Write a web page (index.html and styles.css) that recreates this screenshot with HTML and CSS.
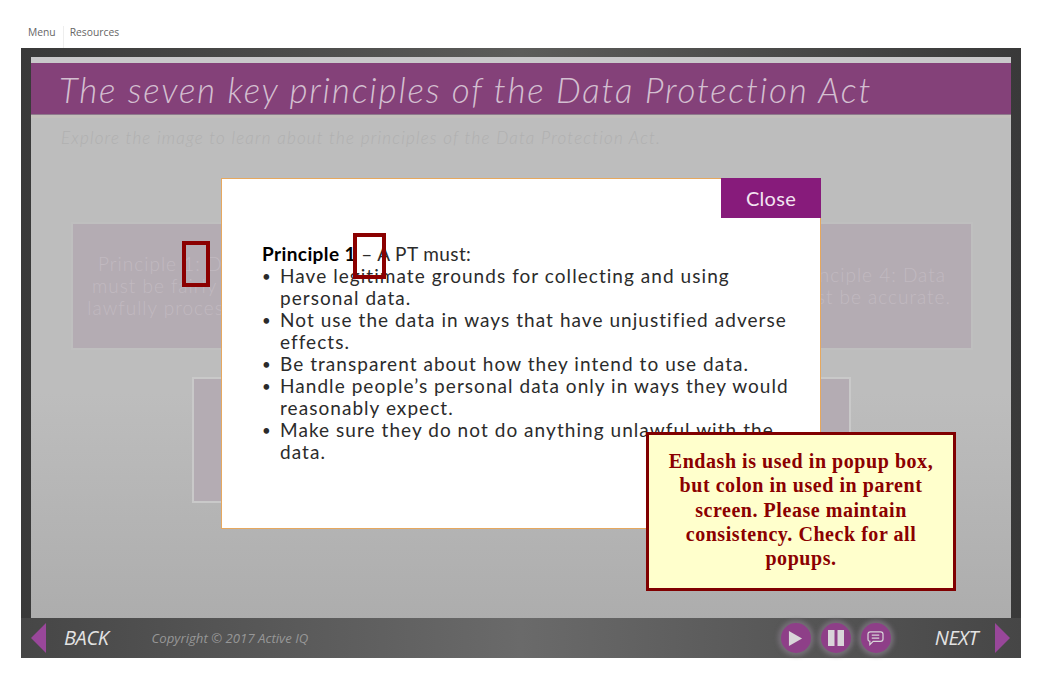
FILE: index.html
```html
<!DOCTYPE html>
<html lang="en">
<head>
<meta charset="utf-8">
<title>The seven key principles of the Data Protection Act</title>
<link rel="stylesheet" href="styles.css">
</head>
<body>
<nav class="topnav"><span class="topnav-item">Menu</span><span class="topnav-item">Resources</span></nav>
<main class="frame">
  <section class="stage">
    <div class="stage-strip"></div>
    <h1 class="title">The seven key principles of the Data Protection Act</h1>
    <div class="title-rule"></div>
    <p class="intro">Explore the image to learn about the principles of the Data Protection Act.</p>
    <div class="cards">
      <div class="card-row card-row-top">
        <div class="card">Principle 1: Data must be fairly and lawfully processed.</div>
        <div class="card">Principle 4: Data must be accurate.</div>
      </div>
      <div class="card-row card-row-bottom">
        <div class="card card-small"></div>
        <div class="card card-small"></div>
      </div>
    </div>
  </section>
  <footer class="controls">
    <svg class="arrow" viewBox="0 0 15 30" aria-hidden="true"><path d="M15 0V30L0 15Z"/></svg>
    <span class="nav-label nav-back">BACK</span>
    <span class="copyright">Copyright © 2017 Active IQ</span>
    <div class="round-buttons">
      <span class="round"><svg viewBox="0 0 16 18" width="15" height="17" aria-hidden="true"><path d="M1 1V17L15 9Z" fill="#d9d5d9"/></svg></span>
      <span class="round"><svg viewBox="0 0 16 16" width="16" height="16" aria-hidden="true"><path d="M0 0H6.500V16H0ZM9.500 0H16V16H9.500Z" fill="#d9d5d9"/></svg></span>
      <span class="round"><svg viewBox="0 0 18 16" width="17" height="15" aria-hidden="true"><path d="M3.500 1H14.500Q17 1 17 3.500V8.500Q17 11 14.500 11H6.500L3 14.500V11Q1 11 1 8.500V3.500Q1 1 3.500 1ZM5 4.500H13M5 7.500H13" fill="none" stroke="#d9d5d9" stroke-width="1.300"/></svg></span>
    </div>
    <span class="nav-label nav-next">NEXT</span>
    <svg class="arrow" viewBox="0 0 15 30" aria-hidden="true"><path d="M0 0V30L15 15Z"/></svg>
  </footer>

  <div class="modal">
    <button class="close" type="button">Close</button>
    <div class="modal-text">
      <p class="lead"><strong>Principle 1</strong> – A PT must:</p>
      <ul class="points">
        <li>Have legitimate grounds for collecting and using personal data.</li>
        <li>Not use the data in ways that have unjustified adverse effects.</li>
        <li>Be transparent about how they intend to use data.</li>
        <li>Handle people’s personal data only in ways they would reasonably expect.</li>
        <li>Make sure they do not do anything unlawful with the data.</li>
      </ul>
    </div>
  </div>
  <div class="mark mark-colon"></div>
  <div class="mark mark-dash"></div>
  <aside class="note">Endash is used in popup box, but colon in used in parent screen. Please maintain consistency. Check for all popups.</aside>
</main>
</body>
</html>
```
FILE: styles.css
```css
* { box-sizing: border-box; }
html, body { margin: 0; padding: 0; background: #fff; }
body { width: 1064px; height: 679px; overflow: hidden; font-family: "Lato", "Liberation Sans", sans-serif; }

.topnav { display: flex; height: 48px; padding: 26px 0 0 28px; font-family: "Open Sans", sans-serif; font-size: 10.300px; line-height: 13px; color: #666; }
.topnav-item { padding-right: 7px; }
.topnav-item + .topnav-item { padding-left: 6px; border-left: 1px solid #eee; }

.frame {
  position: relative;
  display: flex;
  flex-direction: column;
  width: 1000px;
  height: 610px;
  margin-left: 21px;
  padding: 9px 10px 0;
  background: linear-gradient(90deg, #393939 0%, #5c5c5a 50%, #393939 100%);
}

.stage { flex: 1; display: flex; flex-direction: column; background: linear-gradient(180deg, #bdbdbd 0%, #bdbdbd 60%, #adadad 100%); }
.stage-strip { height: 6px; background: #c9c8ca; }
.title {
  height: 52px;
  margin: 0;
  padding: 4px 0 0 28px;
  background: #844179;
  border-bottom: 1px solid #8f7a8c;
  color: #d3bfd0;
  font-size: 35px;
  font-weight: 300;
  font-style: italic;
  line-height: 44px;
  letter-spacing: 1.780px;
  white-space: nowrap;
}
.title-rule { height: 3px; background: #c3bfbb; }
.intro { margin: 9px 0 0 30px; color: #b0b0b0; font-size: 17px; font-weight: 300; font-style: italic; line-height: 22px; letter-spacing: 1.200px; white-space: nowrap; }

.cards { display: flex; flex-direction: column; gap: 31px; margin: 75px 0 0; }
.card-row { display: flex; justify-content: space-between; }
.card-row-top { margin: 0 40px 0 42px; }
.card-row-bottom { margin: 0 162px 0 163px; }
.card {
  display: flex;
  align-items: center;
  justify-content: center;
  width: 202px;
  height: 124px;
  padding: 0 12px;
  background: #b4acb3;
  box-shadow: 0 0 0 2px #bfbfbf;
  color: #c1b9c0;
  font-size: 19px;
  font-weight: 300;
  line-height: 22px;
  letter-spacing: 1px;
  text-align: center;
}
.card-row-bottom .card { box-shadow: 0 0 0 2px #c9c9c9; }
.card-small { height: 122px; width: 60px; }

.controls { display: flex; align-items: center; height: 40px; margin: 0 -10px; padding: 0 11px 0 10px; background: linear-gradient(90deg, #464646 0%, #6a6a6a 50%, #464646 100%); }
.arrow { width: 15px; height: 30px; fill: #99479a; flex: none; }
.nav-label { color: #e3e3e3; font-family: "Open Sans", sans-serif; font-size: 20px; font-style: italic; line-height: 26px; letter-spacing: -0.400px; }
.nav-back { margin-left: 18px; }
.copyright { margin-left: 43px; color: #979797; font-family: "Open Sans", sans-serif; font-size: 13.200px; font-style: italic; }
.round-buttons { display: flex; gap: 10px; margin-left: auto; }
.round { display: flex; align-items: center; justify-content: center; width: 30px; height: 30px; border-radius: 50%; background: #8e3f88; box-shadow: 0 0 4px 3px #756f77; }
.nav-next { margin: 0 17px 0 44px; }

.modal { position: absolute; left: 200px; top: 130px; width: 600px; height: 351px; padding: 64px 30px 0 40px; background: #fff; border: 1px solid #e6a85f; }
.close { position: absolute; right: -1px; top: -1px; width: 100px; height: 40px; border: 0; background: #871b7b; color: #f3e4f1; font-family: "Lato", sans-serif; font-size: 20px; letter-spacing: 0.300px; }
.modal-text { color: #2b2b2b; font-size: 19px; line-height: 22px; letter-spacing: 1.050px; }
.lead { margin: 0; letter-spacing: 0.400px; }
.lead strong { color: #000; font-weight: 700; }
.points { margin: 0; padding: 0 0 0 18px; list-style: none; }
.points li { position: relative; }
.points li::before { content: "•"; position: absolute; left: -18px; font-size: 15px; }

.mark { position: absolute; border: 4px solid #8b0000; }
.mark-colon { left: 161px; top: 193px; width: 28px; height: 46px; }
.mark-dash { left: 332px; top: 185px; width: 33px; height: 46px; }
.note {
  position: absolute;
  left: 625px;
  top: 384px;
  width: 310px;
  height: 159px;
  padding: 14px 12px 0;
  border: 3px solid #800000;
  background: #ffffcc;
  color: #8b0000;
  font-family: "Liberation Serif", serif;
  font-size: 20px;
  font-weight: 700;
  line-height: 24.300px;
  letter-spacing: 0.550px;
  text-align: center;
}
```
